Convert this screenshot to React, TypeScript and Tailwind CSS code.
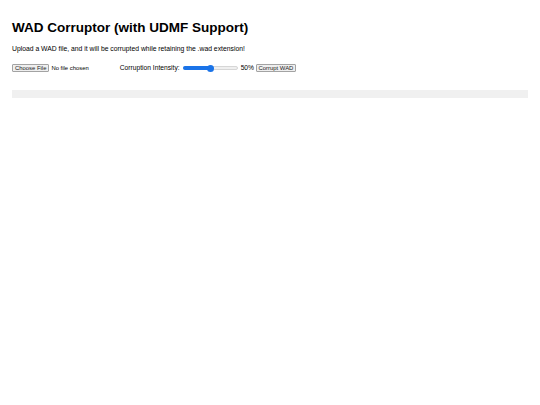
export default function App() {
  return (
    <div className="min-h-[405px] bg-white px-3 pt-[19px] text-black" style={{ fontFamily: '"Liberation Sans", Arial, sans-serif' }}>
      <h1 className="text-[13.5px] font-bold leading-[17px]">WAD Corruptor (with UDMF Support)</h1>
      <p className="mt-[8px] text-[6.8px] leading-[10px]">Upload a WAD file, and it will be corrupted while retaining the .wad extension!</p>
      <div className="mt-[9px] flex items-center h-[10px] text-[5.9px]">
        <span className="flex h-[8px] items-center border border-[#a3a3a3] bg-[#efefef] px-[2px] rounded-[1px] text-[#222]">Choose File</span>
        <span className="ml-[2px]">No file chosen</span>
        <span className="ml-[31px] text-[6.7px]">Corruption Intensity:</span>
        <div className="relative ml-[3px] h-[4px] w-[55px] rounded-full bg-[#efefef] border border-[#d6d6d6]">
          <div className="absolute left-[-1px] top-[-1px] h-[4px] w-[27px] rounded-full bg-[#1a73e8]" />
          <div className="absolute left-[23px] top-[-2.5px] h-[7px] w-[7px] rounded-full bg-[#1a73e8]" />
        </div>
        <span className="ml-[3px] text-[6.7px]">50%</span>
        <span className="ml-[1.5px] flex h-[8px] items-center border border-[#a3a3a3] bg-[#efefef] px-[2px] rounded-[1px] text-[#222]">Corrupt WAD</span>
      </div>
      <div className="mt-[17px] h-[8px] bg-[#f0f0f0]" />
    </div>
  );
}
